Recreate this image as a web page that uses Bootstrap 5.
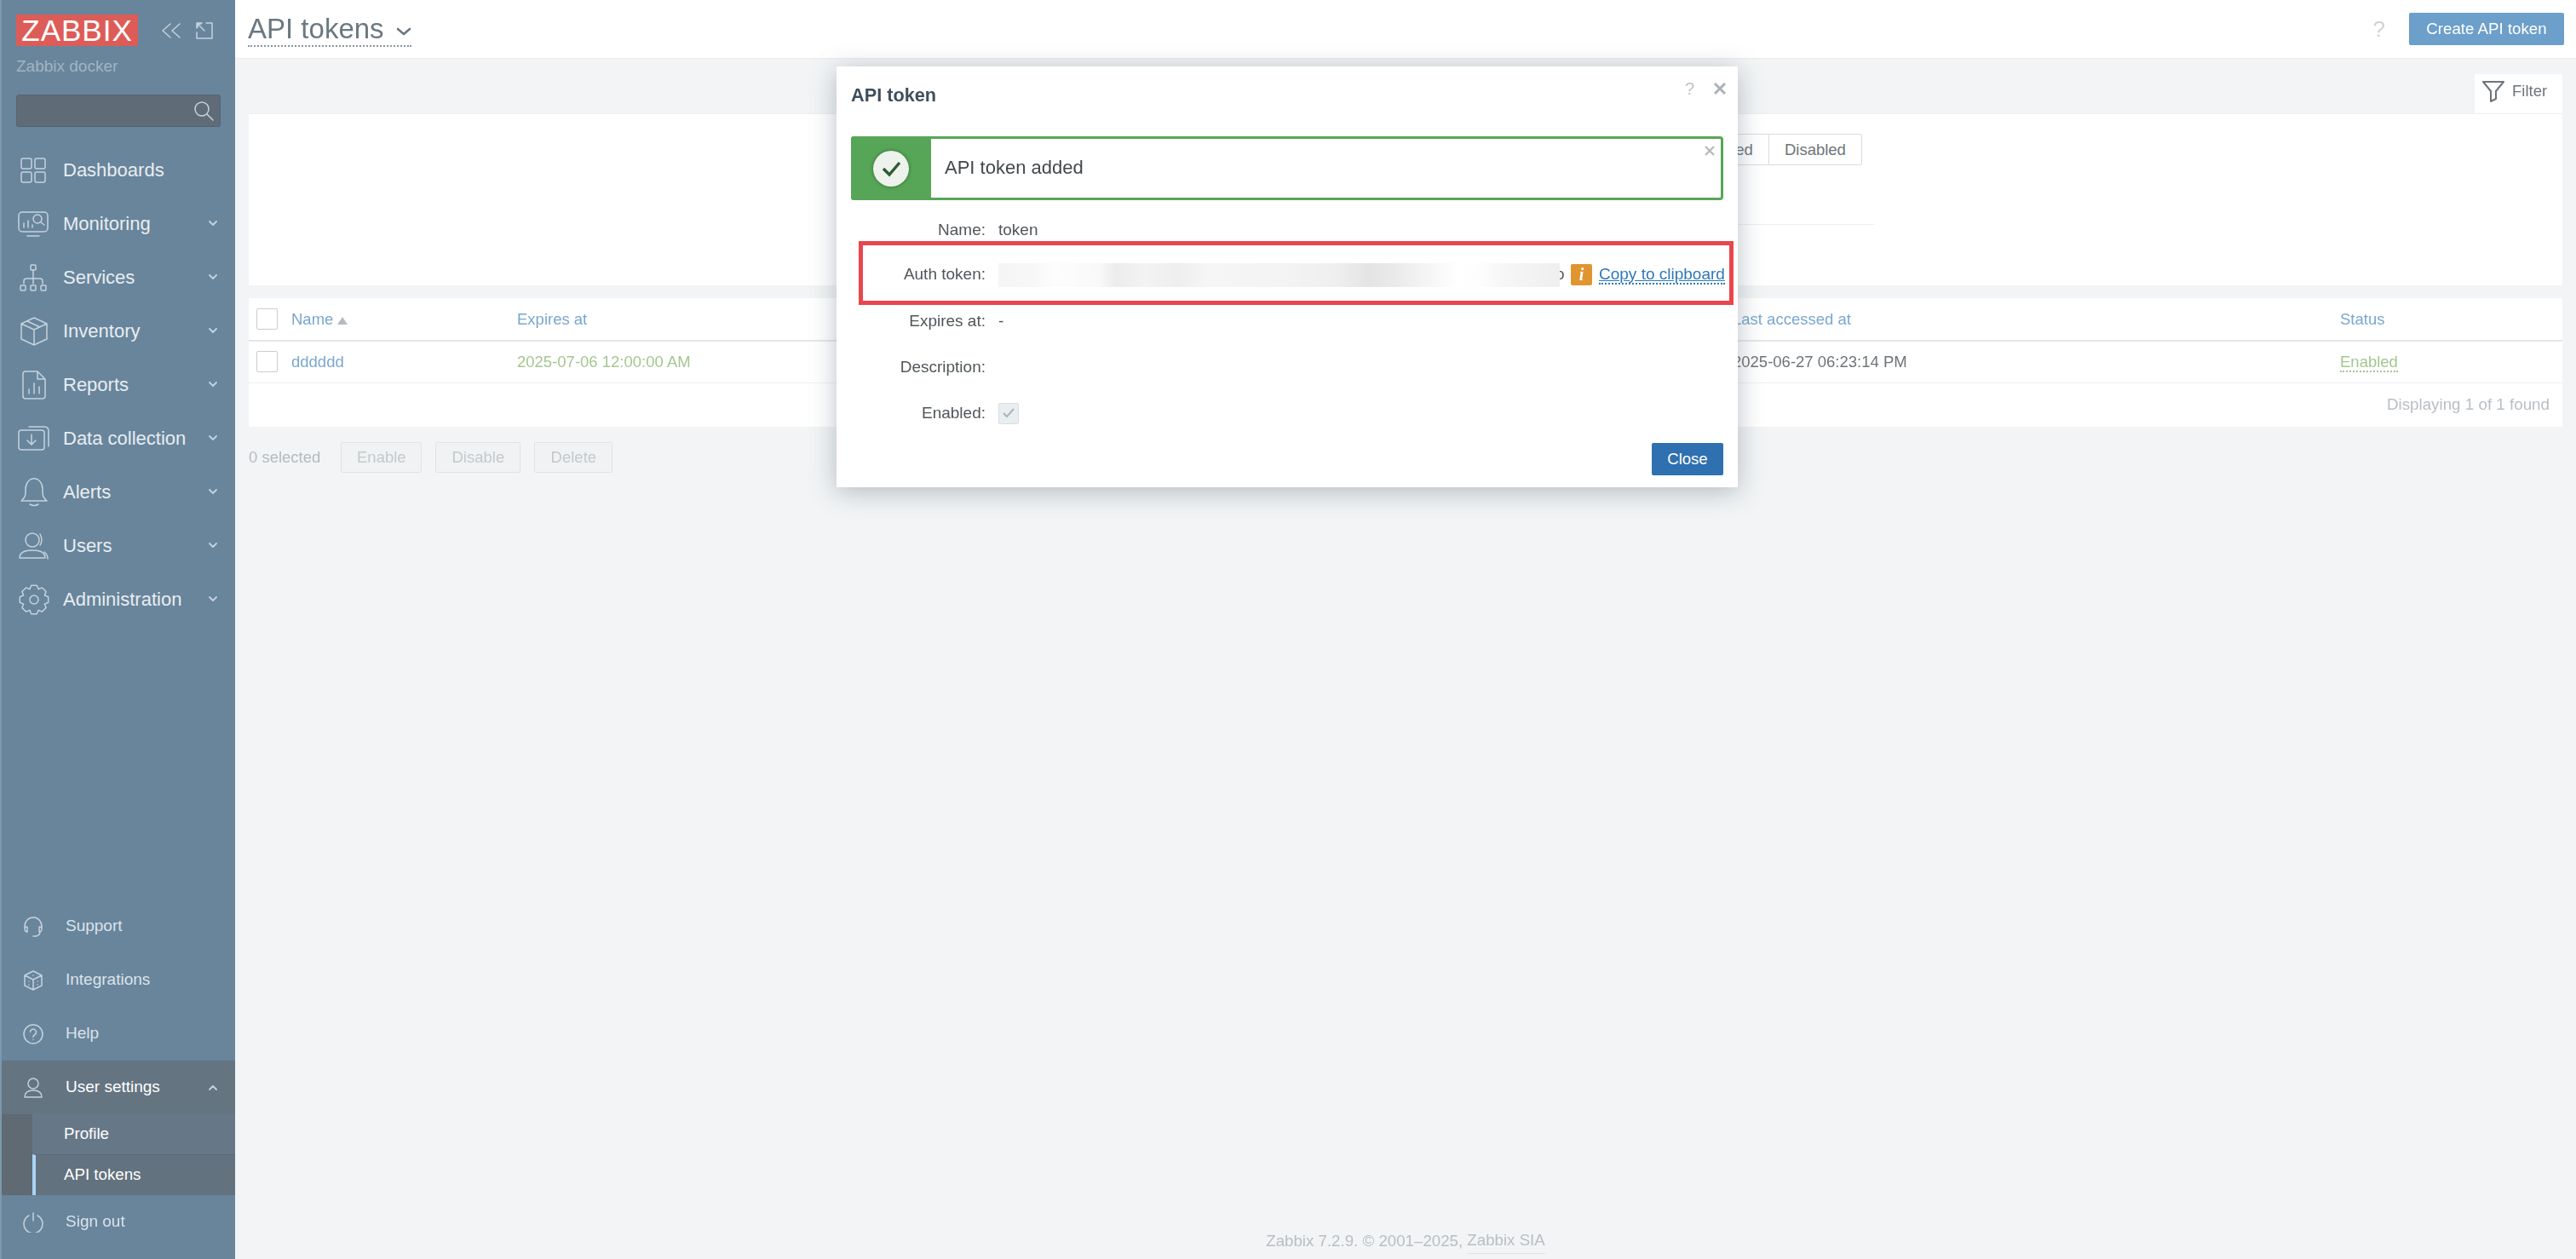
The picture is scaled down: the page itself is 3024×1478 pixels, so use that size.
<!DOCTYPE html>
<html lang="en">
<head>
<meta charset="utf-8">
<title>API tokens</title>
<link href="https://cdn.jsdelivr.net/npm/bootstrap@5.3.0/dist/css/bootstrap.min.css" rel="stylesheet">
<script src="https://cdn.jsdelivr.net/npm/bootstrap@5.3.0/dist/js/bootstrap.bundle.min.js"></script>
<style>
    html, body { height: 100%; }
    body { font-family: "Liberation Sans", Arial, sans-serif; font-size: 18.5px; background: #f2f4f5; color: #6e7478; overflow: hidden; }
    svg { display: block; flex: none; }

    .shell { height: 1478px; filter: blur(.5px); }

    /* sidebar */
    .side { width: 276px; flex: none; background: #68859c; border-left: 2px solid #7d98ad; color: #e8edf0; }
    .side svg { fill: none; stroke: #c5d2dc; stroke-width: 1.5; stroke-linecap: round; stroke-linejoin: round; }
    .side-head { padding: 17px 17px 19px; }
    .logo { width: 143px; height: 37px; background: #dd5c57; color: #fff; font-size: 35px; line-height: 37px; text-align: center; letter-spacing: 1px; }
    .instance { font-size: 19px; color: #a3b4c1; line-height: 22px; margin-top: 13px; }
    .search { height: 38px; margin-top: 22px; background: #5f6c78; border: 1px solid #566370; border-radius: 3px; padding-right: 6px; }
    .nav-row { height: 63px; padding-left: 19px; font-size: 22px; color: #e8edf0; }
    .nav-row .txt { margin-left: 15px; }
    .nav-row .chev { margin-left: auto; margin-right: 21px; stroke-width: 1.8; }
    .nav-sm { font-size: 19px; color: #dbe3e9; padding-left: 25px; }
    .nav-sm .txt { margin-left: 26px; }
    .nav-open { background: #647481; color: #fff; }
    .sub-wrap { background: #5f6a72; padding-left: 36px; }
    .sub-row { height: 47px; padding-left: 37px; font-size: 18.7px; color: #fff; background: #667887; }
    .sub-row.cur { height: 48px; padding-left: 33px; background: #62727f; border-left: 4px solid #a9d3f5; border-top: 1px solid #5b6974; }
    .side-foot { padding-bottom: 12px; }

    /* page head */
    .topbar { height: 69px; background: #fff; border-bottom: 1px solid #e9ecee; padding: 0 14px 0 15px; }
    .page-title { font-size: 33px; color: #6b7880; line-height: 38px; border-bottom: 2px dotted #8a959c; margin-top: 2px; gap: 14px; }
    .page-title svg { margin-top: 6px; }
    .help-q { font-size: 26px; color: #ced3d6; margin-right: 28px; }
    .btn-create { height: 38px; width: 182px; padding: 0; background: #6c9fca; border: 0; border-radius: 2px; color: #fff; font-size: 18.7px; }

    /* filter */
    .content { padding: 18px 16px 0; }
    .filter-tab { width: 103px; height: 46px; background: #fff; color: #6e7478; gap: 9px; padding: 0 0 6px 9px; font-size: 18.5px; }
    .filter-box { height: 202px; background: #fff; border-top: 1px solid #edeff0; padding-top: 23px; }
    .filter-box .btn-group { margin-left: 1679px; height: 37px; }
    .filter-box .btn { padding: 0 18px; background: #fff; border: 1px solid #d9dcde; color: #6e7478; font-size: 18.5px; border-radius: 2px; }
    .filter-line { margin-left: 1679px; width: 230px; height: 70px; border-bottom: 1px solid #eef0f1; }

    /* list */
    .list { margin-top: 15px; background: #fff; }
    .list .table { --bs-table-bg: transparent; table-layout: fixed; margin: 0; font-size: 18.5px; }
    .list th, .list td { padding: 0 8px; vertical-align: middle; font-weight: 400; color: #6e7478; }
    .list thead th { height: 50px; border-bottom: 2px solid #e3e7ea; }
    .list tbody td { height: 49px; border-bottom: 1px solid #eff1f2; }
    .list .lnk { color: #7aa7cf; }
    .list .good { color: #a5c690; }
    .list .dot { border-bottom: 2px dotted #a5c690; }
    .sort { display: inline-block; margin-left: 5px; border: 6px solid transparent; border-top: 0; border-bottom: 9px solid #b4bcc2; }
    .box { display: block; width: 25px; height: 25px; border: 1px solid #c8ced2; border-radius: 2px; background: #fff; margin-left: 1px; }
    .paging { height: 51px; padding-right: 15px; color: #b8bfc4; font-size: 18.8px; }
    .actions { margin-top: 18px; color: #b4bac0; }
    .actions .me { margin-right: 24px; }
    .actions .btn { height: 36px; padding: 0; background: #f0f2f3; border: 1px solid #e1e4e6; border-radius: 2px; color: #c4c9cd; font-size: 18.5px; margin-right: 16px; }
    .page-foot { height: 28px; margin-bottom: 7px; font-size: 18.7px; color: #b9bec4; }
    .page-foot span { border-bottom: 1px solid #dfe2e5; }

    /* dialog */
    .dlg { position: absolute; left: 982px; top: 78px; width: 1058px; height: 494px; padding: 0 17px; border: 0; border-radius: 0; background: #fff; box-shadow: 0 5px 28px rgba(88, 108, 122, .42); color: #50565a; }
    .dlg-title { font-size: 21.7px; font-weight: 700; color: #3f4e5c; line-height: 26px; padding-top: 21px; }
    .dlg-tools { position: absolute; right: 13px; top: 11px; gap: 22px; color: #bcc2c6; font-size: 20px; }
    .msg { height: 75px; margin: 35px 0 0; padding: 0; border: 3px solid #57a657; border-radius: 4px; font-size: 22px; color: #41484c; background: #fff; }
    .msg-ico { width: 94px; margin: -3px 0 -3px -3px; background: #57a657; border-radius: 3px 0 0 3px; }
    .msg-ico i { width: 42px; height: 42px; border-radius: 50%; background: #edf2ec; box-shadow: 0 0 4px #2f6b2f; }
    .msg-text { margin-left: 16px; padding-bottom: 3px; }
    .msg-x { position: absolute; right: 7px; top: 8px; }
    .f-row { height: 36px; margin-top: 18px; font-size: 19px; }
    .f-lab { width: 158px; flex: none; text-align: right; }
    .f-val { margin-left: 15px; }
    .f-first { margin-top: 17px; }
    .f-next { margin-top: 1px; }
    .f-token { height: 75px; margin: -5px -12px 0 9px; border: 5px solid #e9464e; padding-top: 4px; font-size: 19px; }
    .f-token .f-lab { width: 144px; }
    .tok-blur { width: 659px; height: 28px; position: relative; z-index: 1; background: linear-gradient(90deg, #f5f5f5 0, #f7f7f7 6%, #fdfdfd 10%, #f9f9f9 18%, #ececec 21%, #f3f3f3 26%, #eee 32%, #f6f6f6 37%, #f4f4f4 46%, #f3f3f3 52%, #efefef 60%, #e4e4e4 66%, #e9e9e9 70%, #f6f6f6 77%, #fff 82%, #fdfdfd 86%, #f6f6f6 90%, #efefef 100%); }
    .tok-end { margin-left: -5px; width: 18px; }
    .info { width: 25px; height: 25px; background: #e09530; border-radius: 2px; color: #fff; font: italic 700 20px/25px "Liberation Serif", serif; text-align: center; }
    .copy { margin-left: 8px; color: #2f78b8; border-bottom: 2px dotted #2f78b8; line-height: 20px; white-space: nowrap; }
    .f-check { display: block; width: 24px; height: 25px; background: #e9eef1; border: 1px solid #d8dee2; border-radius: 2px; }
    .btn-close-dlg { width: 84px; height: 38px; padding: 0; background: #2f70b0; border: 0; border-radius: 2px; color: #fff; font-size: 18.5px; margin-top: 17px; }
</style>
</head>
<body>
<div class="shell d-flex position-relative">

    <nav class="side d-flex flex-column">
        <div class="side-head">
            <div class="d-flex align-items-center">
                <div class="logo">ZABBIX</div>
                <svg class="ms-auto" width="30" height="22" viewBox="0 0 30 22" style="margin-right:11px"><path d="M12 3 3 11l9 8M23 3l-9 8 9 8"/></svg>
                <svg width="22" height="22" viewBox="0 0 22 22" style="margin-right:8px"><path d="M8 2H2v6M13 2h7v18H2v-7M3 3l8 8M3 3v4M3 3h4"/></svg>
            </div>
            <div class="instance">Zabbix docker</div>
            <div class="search d-flex align-items-center justify-content-end">
                <svg width="26" height="26" viewBox="0 0 26 26"><circle cx="11" cy="11" r="8"/><path d="m17 17 7 7"/></svg>
            </div>
        </div>

        <a class="nav-row d-flex align-items-center text-decoration-none">
            <svg width="38" height="30" viewBox="0 0 38 30"><rect x="4" y="1" width="12" height="12" rx="2"/><rect x="20" y="1" width="12" height="12" rx="2"/><rect x="4" y="17" width="12" height="12" rx="2"/><rect x="20" y="17" width="12" height="12" rx="2"/></svg>
            <span class="txt">Dashboards</span>
        </a>
        <a class="nav-row d-flex align-items-center text-decoration-none">
            <svg width="38" height="30" viewBox="0 0 38 30"><rect x="1" y="1" width="34" height="23" rx="4"/><path d="M11 29h14M7 19v-5M12 19v-8M17 19v-3"/><circle cx="23" cy="9" r="5"/><path d="m27 13 4 3"/></svg>
            <span class="txt">Monitoring</span>
            <svg class="chev" width="10" height="7" viewBox="0 0 10 7"><path d="m1 1 4 4 4-4"/></svg>
        </a>
        <a class="nav-row d-flex align-items-center text-decoration-none">
            <svg width="38" height="32" viewBox="0 0 38 32"><rect x="15" y="1" width="6" height="6" rx="1"/><path d="M18 7v16M7 23v-3q0-3 3-3h16q3 0 3 3v3"/><rect x="3" y="25" width="6" height="6" rx="1"/><rect x="15" y="25" width="6" height="6" rx="1"/><rect x="27" y="25" width="6" height="6" rx="1"/></svg>
            <span class="txt">Services</span>
            <svg class="chev" width="10" height="7" viewBox="0 0 10 7"><path d="m1 1 4 4 4-4"/></svg>
        </a>
        <a class="nav-row d-flex align-items-center text-decoration-none">
            <svg width="38" height="34" viewBox="0 0 38 34"><path d="M19 1 34 8v18l-15 7-15-7V8zM4 8l15 7 15-7M19 15v18M11 5l15 7"/></svg>
            <span class="txt">Inventory</span>
            <svg class="chev" width="10" height="7" viewBox="0 0 10 7"><path d="m1 1 4 4 4-4"/></svg>
        </a>
        <a class="nav-row d-flex align-items-center text-decoration-none">
            <svg width="38" height="34" viewBox="0 0 38 34"><path d="M9 1h14l9 9v20q0 3-3 3H9q-3 0-3-3V4q0-3 3-3zM23 1v9h9M13 27v-5M19 27V15M25 27v-8"/></svg>
            <span class="txt">Reports</span>
            <svg class="chev" width="10" height="7" viewBox="0 0 10 7"><path d="m1 1 4 4 4-4"/></svg>
        </a>
        <a class="nav-row d-flex align-items-center text-decoration-none">
            <svg width="38" height="30" viewBox="0 0 38 30"><rect x="1" y="5" width="30" height="23" rx="3"/><path d="M13 1h18q5 0 5 5v18M16 10v12M11 17l5 5 5-5"/></svg>
            <span class="txt">Data collection</span>
            <svg class="chev" width="10" height="7" viewBox="0 0 10 7"><path d="m1 1 4 4 4-4"/></svg>
        </a>
        <a class="nav-row d-flex align-items-center text-decoration-none">
            <svg width="38" height="34" viewBox="0 0 38 34"><path d="M4 27q5-4 5-10v-4a9 11 0 0 1 20 0v4q0 6 5 10zM14 31q5 3 10 0"/></svg>
            <span class="txt">Alerts</span>
            <svg class="chev" width="10" height="7" viewBox="0 0 10 7"><path d="m1 1 4 4 4-4"/></svg>
        </a>
        <a class="nav-row d-flex align-items-center text-decoration-none">
            <svg width="38" height="32" viewBox="0 0 38 32"><circle cx="17" cy="9" r="8"/><path d="M2 30q0-9 15-9t15 9zM26 2q4 7 0 13M31 23q4 3 4 8"/></svg>
            <span class="txt">Users</span>
            <svg class="chev" width="10" height="7" viewBox="0 0 10 7"><path d="m1 1 4 4 4-4"/></svg>
        </a>
        <a class="nav-row d-flex align-items-center text-decoration-none">
            <svg width="38" height="36" viewBox="-19 -18 38 36">
                <defs><path id="tooth" d="M-5.17-12.47-3.24-16.69H3.24L5.17-12.47"/></defs>
                <use href="#tooth"/><use href="#tooth" transform="rotate(45)"/><use href="#tooth" transform="rotate(90)"/><use href="#tooth" transform="rotate(135)"/><use href="#tooth" transform="rotate(180)"/><use href="#tooth" transform="rotate(225)"/><use href="#tooth" transform="rotate(270)"/><use href="#tooth" transform="rotate(315)"/>
                <circle r="5"/>
            </svg>
            <span class="txt">Administration</span>
            <svg class="chev" width="10" height="7" viewBox="0 0 10 7"><path d="m1 1 4 4 4-4"/></svg>
        </a>

        <div class="side-foot mt-auto">
            <a class="nav-row nav-sm d-flex align-items-center text-decoration-none">
                <svg width="24" height="24" viewBox="0 0 24 24"><path d="M2 14V11a10 10 0 0 1 20 0v3M2 14q0 4 3 4V12q-3 0-3 2zM22 14q0 4-3 4V12q3 0 3 2zM20 18q0 4-5 5h-3"/></svg>
                <span class="txt">Support</span>
            </a>
            <a class="nav-row nav-sm d-flex align-items-center text-decoration-none">
                <svg width="24" height="24" viewBox="0 0 24 24"><path d="m12 1 10 5v12l-10 5-10-5V6zM2 6l10 5 10-5M12 11v12"/><path d="M12 6h.01M7 13h.01M7 17h.01M17 13h.01M17 17h.01"/></svg>
                <span class="txt">Integrations</span>
            </a>
            <a class="nav-row nav-sm d-flex align-items-center text-decoration-none">
                <svg width="24" height="24" viewBox="0 0 24 24"><circle cx="12" cy="12" r="11"/><path d="M8.5 9.5a3.5 3.5 0 1 1 5.5 3q-2 1-2 3M12 18.5h.01"/></svg>
                <span class="txt">Help</span>
            </a>
            <a class="nav-row nav-sm nav-open d-flex align-items-center text-decoration-none">
                <svg width="24" height="24" viewBox="0 0 24 24"><circle cx="12" cy="7" r="6"/><path d="M2 23q0-8 10-8t10 8z"/></svg>
                <span class="txt">User settings</span>
                <svg class="chev" width="10" height="7" viewBox="0 0 10 7"><path d="m1 6 4-4 4 4"/></svg>
            </a>
            <div class="sub-wrap">
                <a class="sub-row d-flex align-items-center text-decoration-none">Profile</a>
                <a class="sub-row cur d-flex align-items-center text-decoration-none">API tokens</a>
            </div>
            <a class="nav-row nav-sm d-flex align-items-center text-decoration-none">
                <svg width="24" height="24" viewBox="0 0 24 24"><path d="M12 1v9M7 4a11 11 0 1 0 10 0"/></svg>
                <span class="txt">Sign out</span>
            </a>
        </div>
    </nav>

    <div class="flex-grow-1 d-flex flex-column">
        <header class="topbar d-flex align-items-center">
            <div class="page-title d-inline-flex align-items-center">
                API tokens
                <svg width="18" height="10" viewBox="0 0 18 10" fill="none" stroke="#6b7880" stroke-width="2.6" stroke-linecap="round" stroke-linejoin="round"><path d="m2 2 7 6 7-6"/></svg>
            </div>
            <span class="help-q ms-auto">?</span>
            <button class="btn btn-create">Create API token</button>
        </header>

        <main class="content">
            <div class="d-flex justify-content-end">
                <div class="filter-tab d-flex align-items-center">
                    <svg width="26" height="25" viewBox="0 0 26 25" fill="none" stroke="#6e7478" stroke-width="2" stroke-linejoin="round"><path d="M1 1h24l-9 11v9l-6 3V12z"/></svg>
                    Filter
                </div>
            </div>
            <div class="filter-box">
                <div class="btn-group">
                    <button class="btn">Enabled</button>
                    <button class="btn">Disabled</button>
                </div>
                <div class="filter-line"></div>
            </div>

            <div class="list">
                <table class="table">
                    <colgroup>
                        <col style="width:42px"><col style="width:265px"><col style="width:1427px"><col style="width:713px"><col>
                    </colgroup>
                    <thead>
                        <tr>
                            <th><span class="box"></span></th>
                            <th class="lnk">Name<span class="sort"></span></th>
                            <th class="lnk">Expires at</th>
                            <th class="lnk">Last accessed at</th>
                            <th class="lnk">Status</th>
                        </tr>
                    </thead>
                    <tbody>
                        <tr>
                            <td><span class="box"></span></td>
                            <td class="lnk">dddddd</td>
                            <td class="good">2025-07-06 12:00:00 AM</td>
                            <td>2025-06-27 06:23:14 PM</td>
                            <td class="good"><span class="dot">Enabled</span></td>
                        </tr>
                    </tbody>
                </table>
                <div class="paging d-flex align-items-center justify-content-end">Displaying 1 of 1 found</div>
            </div>

            <div class="actions d-flex align-items-center">
                <span class="me">0 selected</span>
                <button class="btn" style="width:95px">Enable</button>
                <button class="btn" style="width:100px">Disable</button>
                <button class="btn" style="width:92px">Delete</button>
            </div>
        </main>

        <footer class="page-foot mt-auto d-flex align-items-center justify-content-center">Zabbix 7.2.9. © 2001–2025,&nbsp;<span>Zabbix SIA</span></footer>
    </div>

    <div class="dlg modal-content">
        <div class="dlg-title">API token</div>
        <div class="dlg-tools d-flex align-items-center">
            <span>?</span>
            <svg width="16" height="16" viewBox="0 0 16 16" fill="none" stroke="#aab2b8" stroke-width="3"><path d="m2 2 12 12M14 2 2 14"/></svg>
        </div>

        <div class="msg alert d-flex position-relative">
            <div class="msg-ico d-flex align-items-center justify-content-center">
                <i class="d-flex align-items-center justify-content-center">
                    <svg width="24" height="20" viewBox="0 0 24 20" fill="none" stroke="#2d5a33" stroke-width="3.4"><path d="m3 10 7 7L22 3"/></svg>
                </i>
            </div>
            <div class="msg-text d-flex align-items-center">API token added</div>
            <svg class="msg-x" width="12" height="12" viewBox="0 0 12 12" fill="none" stroke="#b5bbbf" stroke-width="2.4"><path d="m1 1 10 10M11 1 1 11"/></svg>
        </div>

        <div class="f-row f-first d-flex align-items-center">
            <div class="f-lab">Name:</div>
            <div class="f-val">token</div>
        </div>
        <div class="f-token d-flex align-items-center">
            <div class="f-lab">Auth token:</div>
            <div class="f-val tok-blur"></div>
            <span class="tok-end">o</span>
            <span class="info">i</span>
            <a class="copy">Copy to clipboard</a>
        </div>
        <div class="f-row f-next d-flex align-items-center">
            <div class="f-lab">Expires at:</div>
            <div class="f-val">-</div>
        </div>
        <div class="f-row d-flex align-items-center">
            <div class="f-lab">Description:</div>
        </div>
        <div class="f-row d-flex align-items-center">
            <div class="f-lab">Enabled:</div>
            <div class="f-val">
                <span class="f-check d-flex align-items-center justify-content-center">
                    <svg width="14" height="12" viewBox="0 0 14 12" fill="none" stroke="#aab5bb" stroke-width="2"><path d="m1 6 4 4 8-9"/></svg>
                </span>
            </div>
        </div>
        <div class="d-flex justify-content-end">
            <button class="btn btn-close-dlg">Close</button>
        </div>
    </div>
</div>
</body>
</html>
